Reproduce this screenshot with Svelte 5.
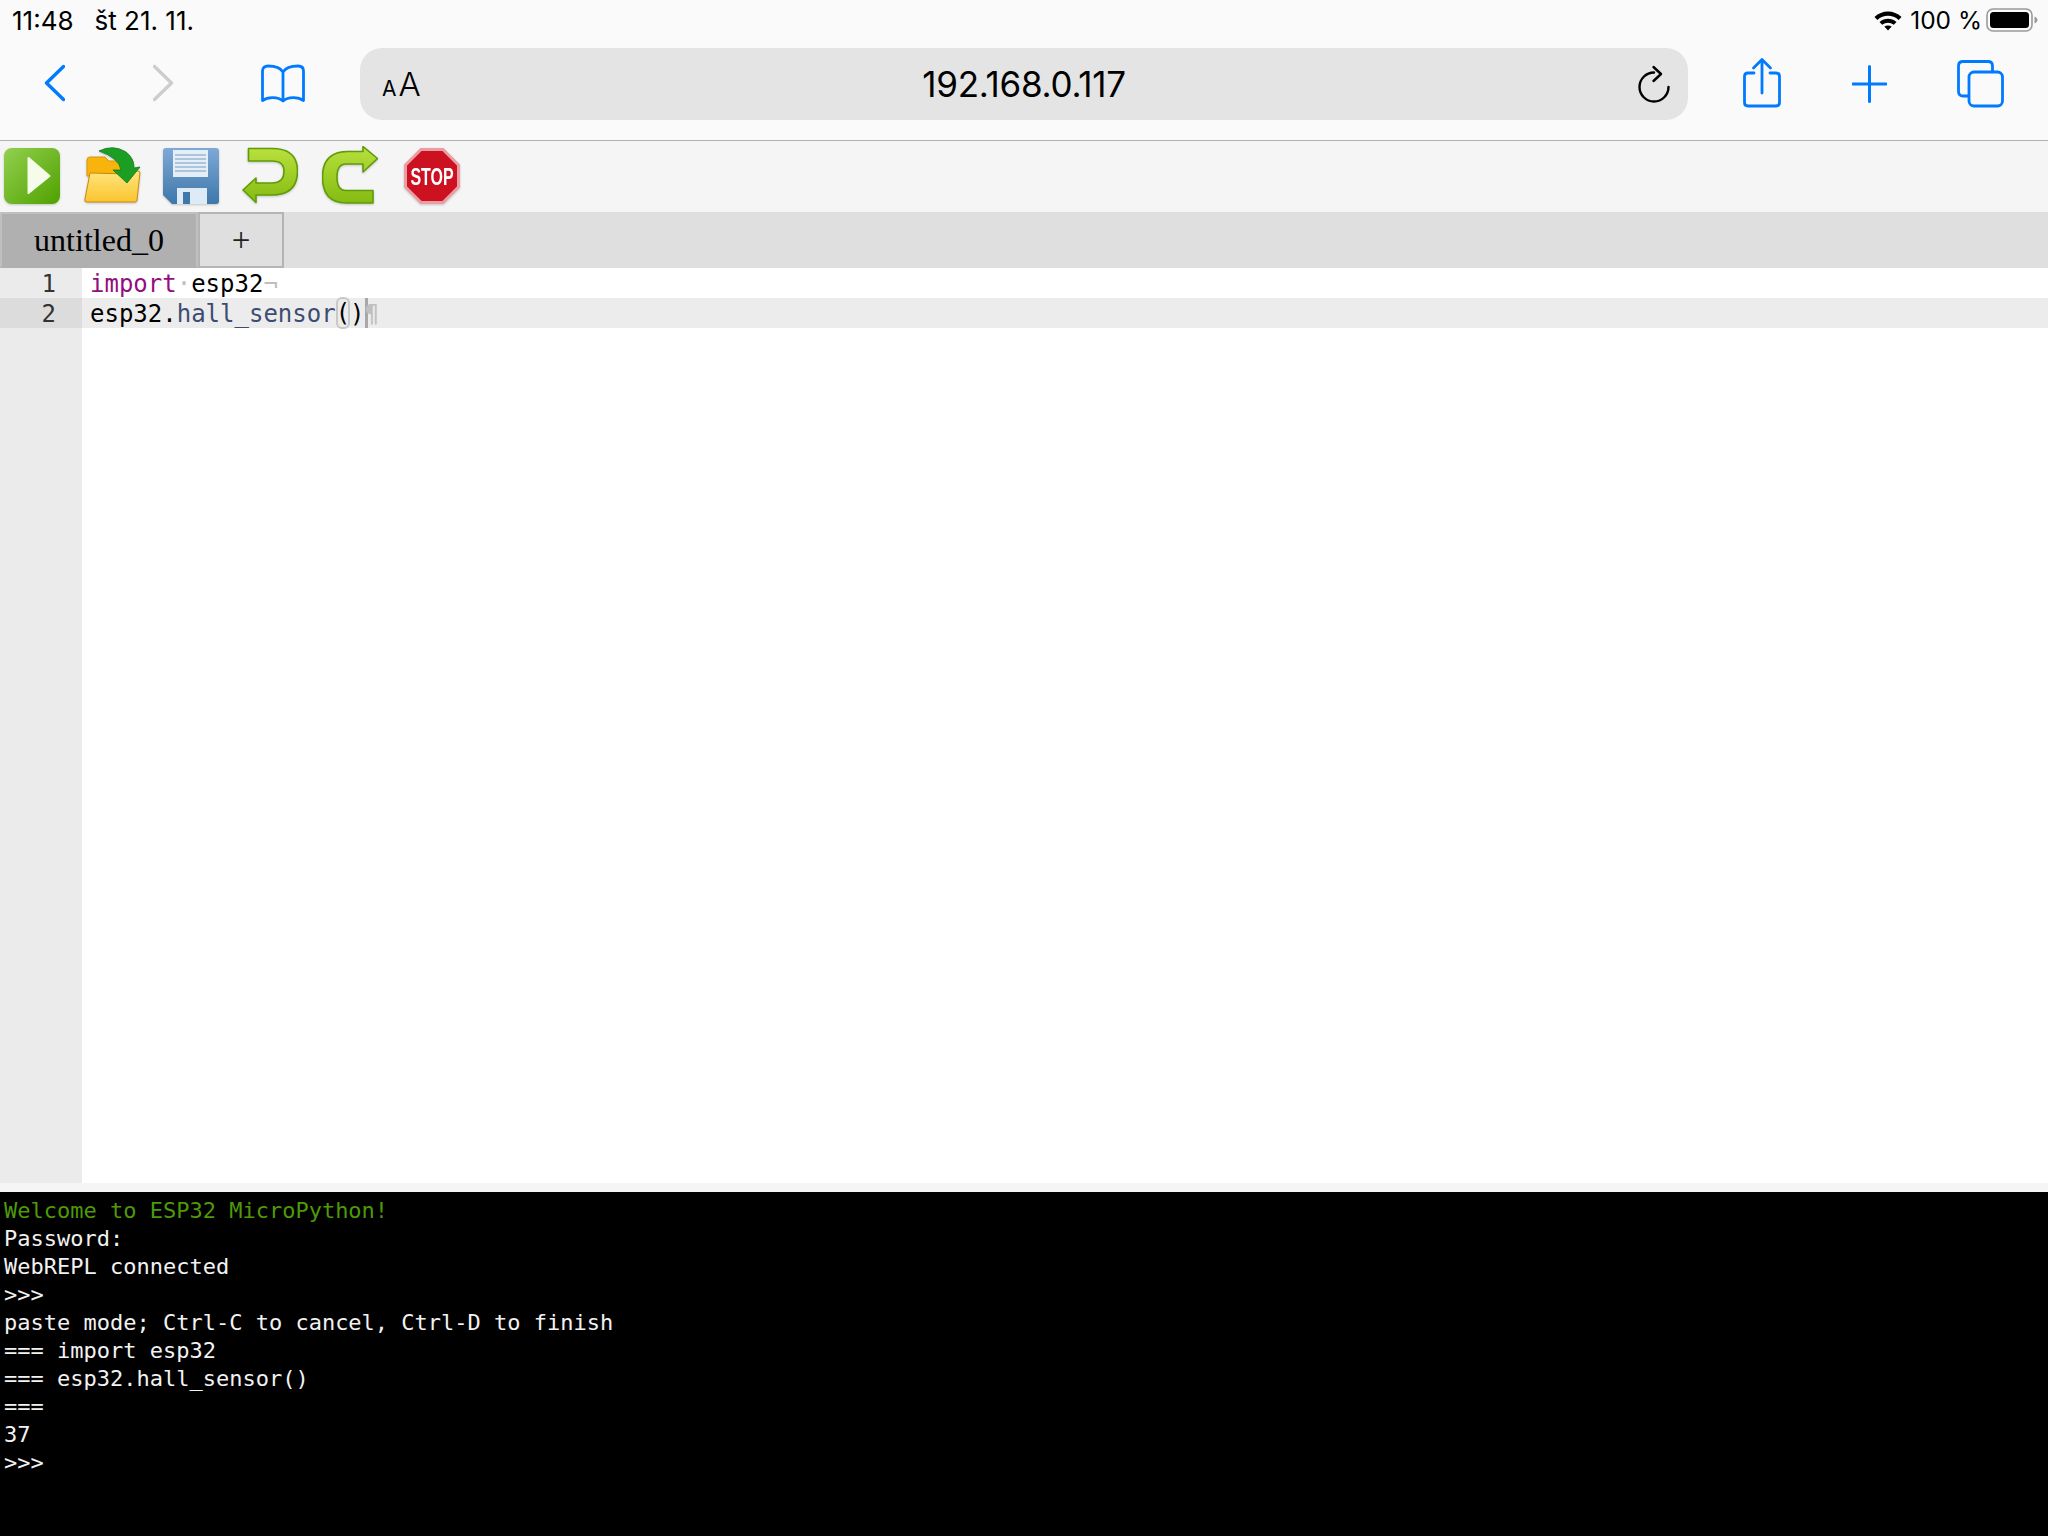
<script>
  const terminal = [
    'Password:',
    'WebREPL connected',
    '>>>',
    'paste mode; Ctrl-C to cancel, Ctrl-D to finish',
    '=== import esp32',
    '=== esp32.hall_sensor()',
    '===',
    '37',
    '>>>'
  ];
</script>

<div class="page">
  <header class="safari">
    <div class="status">
      <span class="time">11:48</span>
      <span class="date">št 21. 11.</span>
      <span class="spacer"></span>
      <svg class="wifi" width="28" height="22" viewBox="0 0 28 22">
        <path d="M0.5 8C8 0.6 20 0.6 27.5 8L24.6 11C18.6 5.4 9.4 5.4 3.4 11Z" fill="#000" />
        <path d="M5.5 13C10.6 8.6 17.4 8.6 22.5 13L19.8 15.8C16.2 12.9 11.8 12.9 8.2 15.8Z" fill="#000" />
        <path d="M10.3 17.6C12.5 16 15.5 16 17.7 17.6L14 21.6Z" fill="#000" />
      </svg>
      <span class="battery-text">100 %</span>
      <svg class="battery" width="52" height="24" viewBox="0 0 52 24">
        <rect x="1" y="1" width="45" height="22" rx="6" fill="none" stroke="#9a9a9a" stroke-width="1.6" />
        <rect x="4" y="4" width="39" height="16" rx="3.5" fill="#000" />
        <path d="M48.5 8.5C50.5 9.2 51.5 10.5 51.5 12C51.5 13.5 50.5 14.8 48.5 15.5Z" fill="#9a9a9a" />
      </svg>
    </div>
    <div class="nav">
      <svg class="back" width="21" height="72" viewBox="0 0 21 72">
        <path d="M19.5 18.5L2.5 35L19.5 51.5" fill="none" stroke="#007aff" stroke-width="3.4" stroke-linecap="round" stroke-linejoin="round" />
      </svg>
      <svg class="forward" width="21" height="72" viewBox="0 0 21 72">
        <path d="M1.5 18.5L18.5 35L1.5 51.5" fill="none" stroke="#cdcdcd" stroke-width="3.4" stroke-linecap="round" stroke-linejoin="round" />
      </svg>
      <svg class="book" width="44" height="72" viewBox="0 0 44 72">
        <path d="M22 24C19 19 13 18 7 18C3.5 18 1.5 20 1.5 23V52.5C7 48.5 17 48.5 22 53C27 48.5 37 48.5 42.5 52.5V23C42.5 20 40.5 18 37 18C31 18 25 19 22 24V53" fill="none" stroke="#007aff" stroke-width="2.8" stroke-linejoin="round" stroke-linecap="round" />
      </svg>
      <div class="url">
        <span class="aa"><span class="small-a">A</span><span class="big-a">A</span></span>
        <span class="address">192.168.0.117</span>
        <svg class="reload" width="34" height="40" viewBox="0 0 34 40">
          <path d="M17 7.5A14.5 14.5 0 1 0 31.5 22" fill="none" stroke="#000" stroke-width="2.4" stroke-linecap="round" />
          <path d="M16.5 2L24 9L16.5 16" fill="none" stroke="#000" stroke-width="2.4" stroke-linecap="round" stroke-linejoin="round" />
        </svg>
      </div>
      <svg class="share" width="38" height="72" viewBox="0 0 38 72">
        <path d="M11 25H5C2.8 25 1.5 26.3 1.5 28.5V54.5C1.5 56.7 2.8 58 5 58H33C35.2 58 36.5 56.7 36.5 54.5V28.5C36.5 26.3 35.2 25 33 25H27" fill="none" stroke="#007aff" stroke-width="2.8" stroke-linecap="round" />
        <path d="M19 45V12.5M10.5 20L19 11.5L27.5 20" fill="none" stroke="#007aff" stroke-width="2.8" stroke-linecap="round" stroke-linejoin="round" />
      </svg>
      <svg class="plus" width="35" height="72" viewBox="0 0 35 72">
        <path d="M17.5 18.5V53.5M1 36H34" fill="none" stroke="#007aff" stroke-width="3" stroke-linecap="round" />
      </svg>
      <svg class="tabs" width="47" height="72" viewBox="0 0 47 72">
        <path d="M11 48H6C3 48 1.5 46.5 1.5 43.5V18C1.5 15 3 13.5 6 13.5H31C34 13.5 35.5 15 35.5 18V23" fill="none" stroke="#007aff" stroke-width="2.8" />
        <rect x="12" y="24" width="33.5" height="34" rx="5" fill="none" stroke="#007aff" stroke-width="2.8" />
      </svg>
    </div>
  </header>

  <div class="tools">
    <svg class="icon low" width="56" height="56" viewBox="0 0 56 56">
      <defs>
        <linearGradient id="play" x1="0" y1="0" x2="1" y2="1">
          <stop offset="0" stop-color="#93d04f" />
          <stop offset="1" stop-color="#4fa100" />
        </linearGradient>
      </defs>
      <rect width="56" height="56" rx="8" fill="url(#play)" />
      <path d="M24.5 10L45.5 28L24.5 45Z" fill="#f6fcea" stroke="#f6fcea" stroke-width="2" stroke-linejoin="round" />
    </svg>

    <svg class="icon open" width="58" height="58" viewBox="0 0 58 58">
      <defs>
        <linearGradient id="folder" x1="0" y1="0" x2="0" y2="1">
          <stop offset="0" stop-color="#ffe680" />
          <stop offset="1" stop-color="#fbc52f" />
        </linearGradient>
      </defs>
      <path d="M3 30V14Q3 11 6 11H21L25 15H49V30Z" fill="#f8b40c" stroke="#d9960a" />
      <path d="M6 27L46 28L51 24L56 26L53 54Q53 56 51 56H3Q0 56 1 53Z" fill="url(#folder)" stroke="#c8890a" />
      <path d="M15 5Q29 -2 42 6Q50 12 50 22L56 21L43 37L29 24L37 24Q35 12 15 5Z" fill="#1c9e25" stroke="#0f7a18" stroke-width="0.8" />
    </svg>

    <svg class="icon low save" width="56" height="56" viewBox="0 0 56 56">
      <defs>
        <linearGradient id="disk" x1="0" y1="0" x2="0" y2="1">
          <stop offset="0" stop-color="#7fa9d6" />
          <stop offset="1" stop-color="#3d77aa" />
        </linearGradient>
      </defs>
      <path d="M3 0H53Q56 0 56 3V53Q56 56 53 56H9L0 47V3Q0 0 3 0Z" fill="url(#disk)" />
      <rect x="10" y="2" width="35" height="27" fill="#e4eef7" />
      <path d="M12 7H43M12 11H43M12 15H43M12 19H43M12 23H43" stroke="#9ab8d4" stroke-width="1.5" />
      <rect x="14" y="40" width="30" height="16" fill="#dcebf5" />
      <rect x="20" y="44" width="7" height="12" fill="#3f77a8" />
    </svg>

    <svg class="icon undo" width="56" height="58" viewBox="0 0 56 58">
      <defs>
        <linearGradient id="arrow" x1="0" y1="0" x2="0" y2="1">
          <stop offset="0" stop-color="#b9e03e" />
          <stop offset="1" stop-color="#84bb12" />
        </linearGradient>
      </defs>
      <path d="M6.5 2.5H30Q55.5 2.5 55.5 25Q55.5 49 30 49H14V56.5L1 44L14 32V37H30Q42 37 42 25Q42 15 30 15H6.5Z" fill="url(#arrow)" stroke="#5f9c08" stroke-width="1.6" stroke-linejoin="round" />
    </svg>

    <svg class="icon" width="56" height="58" viewBox="0 0 56 58">
      <path d="M51 44.5H24Q15 44.5 15 31Q15 18 24 18H41V26L55.5 12.5L41 0.5V5.5H26Q0.5 5.5 0.5 31Q0.5 57 24 57H51Z" fill="url(#arrow)" stroke="#5f9c08" stroke-width="1.6" stroke-linejoin="round" />
    </svg>

    <svg class="icon low stop-sign" width="56" height="56" viewBox="0 0 56 56">
      <path d="M17 1.5H39L54.5 17V39L39 54.5H17L1.5 39V17Z" fill="#cc1120" stroke="#ec9ca4" stroke-width="3" />
      <text class="stop" text-anchor="middle" transform="translate(28 36.5) scale(0.82 1.24)">STOP</text>
    </svg>
  </div>

  <div class="tabbar">
    <div class="tab active">untitled_0</div>
    <div class="tab add">+</div>
  </div>

  <main class="editor">
    <div class="gutter">
      <div class="num">1</div>
      <div class="num current">2</div>
    </div>
    <div class="code">
      <div class="line"><span class="kw">import</span><span class="inv">·</span>esp32<span class="inv">¬</span></div>
      <div class="line current">esp32.<span class="fn">hall_sensor</span><span class="bracket">(</span>)<span class="caret"></span><span class="inv">¶</span></div>
    </div>
  </main>

  <div class="splitter"></div>

  <section class="terminal">
    <div class="row welcome">Welcome to ESP32 MicroPython!</div>
    {#each terminal as row}
      <div class="row">{row}</div>
    {/each}
  </section>
</div>

<style>
  :global(body) {
    margin: 0;
    overflow: hidden;
  }

  .page {
    width: 2048px;
    height: 1536px;
    display: flex;
    flex-direction: column;
    background: #fff;
  }

  .safari {
    height: 141px;
    flex: none;
    box-sizing: border-box;
    background: #fafafa;
    border-bottom: 1px solid #b2b2b2;
  }

  .status {
    height: 40px;
    display: flex;
    align-items: center;
    padding-left: 12px;
    font-family: Inter, sans-serif;
    font-size: 26px;
    color: #000;
  }

  .date {
    margin-left: 21px;
  }

  .spacer {
    flex: 1;
  }

  .wifi {
    margin-right: 8px;
  }

  .battery-text {
    font-size: 24.5px;
  }

  .battery {
    margin-left: 4px;
    margin-right: 10px;
  }

  .nav {
    height: 72px;
    margin-top: 8px;
    display: flex;
    padding-left: 44px;
  }

  .forward {
    margin-left: 88px;
  }

  .book {
    margin-left: 87px;
  }

  .url {
    width: 1328px;
    margin-left: 55px;
    position: relative;
    display: flex;
    align-items: center;
    justify-content: space-between;
    box-sizing: border-box;
    padding: 0 17px 0 22px;
    background: #e4e4e4;
    border-radius: 22px;
    color: #000;
    font-family: Inter, sans-serif;
  }

  .aa {
    display: flex;
    align-items: baseline;
    gap: 2px;
  }

  .small-a {
    font-size: 21px;
  }

  .big-a {
    font-size: 33px;
    font-weight: 300;
  }

  .address {
    position: absolute;
    left: 0;
    right: 0;
    text-align: center;
    font-size: 35px;
    letter-spacing: -0.25px;
  }

  .reload {
    margin-top: 2px;
  }

  .share {
    margin-left: 55px;
  }

  .plus {
    margin-left: 71px;
  }

  .tabs {
    margin-left: 70px;
  }

  .tools {
    height: 71px;
    flex: none;
    box-sizing: border-box;
    display: flex;
    align-items: flex-start;
    gap: 24px;
    padding: 5px 0 0 4px;
    background: #f5f5f5;
  }

  .icon {
    flex: none;
    filter: blur(0.5px) drop-shadow(0 1px 1px rgba(0, 0, 0, 0.2));
  }

  .low {
    margin-top: 2px;
  }

  .open {
    margin-right: -2px;
  }

  .save,
  .undo {
    margin-left: -1px;
  }

  .stop-sign {
    margin-left: 2px;
  }

  .stop {
    font-family: "Liberation Sans", sans-serif;
    font-size: 19.5px;
    font-weight: 700;
    fill: #fff;
  }

  .tabbar {
    height: 56px;
    flex: none;
    display: flex;
    background: #dfdfdf;
  }

  .tab {
    height: 56px;
    box-sizing: border-box;
    display: flex;
    align-items: center;
    justify-content: center;
    font-family: "Liberation Serif", serif;
    font-size: 32px;
    color: #000;
  }

  .active {
    width: 198px;
    border: 2px solid #c0c0c0;
    border-bottom: 2px solid #b0b0b0;
    background: #b0b0b0;
  }

  .add {
    width: 86px;
    border: 2px solid #b4b4b4;
    font-size: 33px;
    color: #222;
  }

  .editor {
    flex: 1;
    display: flex;
    font-family: "DejaVu Sans Mono", monospace;
    font-size: 24px;
    line-height: 30px;
    color: #000;
  }

  .gutter {
    width: 82px;
    flex: none;
    background: #ebebeb;
    color: #333;
  }

  .num {
    height: 30px;
    box-sizing: border-box;
    padding-top: 1px;
    padding-right: 26px;
    text-align: right;
  }

  .num.current {
    background: #dcdcdc;
  }

  .code {
    flex: 1;
  }

  .line {
    height: 30px;
    box-sizing: border-box;
    padding: 1px 0 0 8px;
    white-space: pre;
  }

  .line.current {
    background: #ececec;
  }

  .kw {
    color: #930f80;
  }

  .fn {
    color: #3c4c72;
  }

  .inv {
    color: #bfbfbf;
  }

  .bracket {
    display: inline-block;
    height: 32px;
    margin-top: -2px;
    box-sizing: border-box;
    vertical-align: top;
    line-height: 32px;
    outline: 2px solid #c8c8c8;
    outline-offset: -2px;
    border-radius: 6px;
  }

  .caret {
    display: inline-block;
    width: 3px;
    height: 30px;
    margin-top: -1px;
    margin-right: -3px;
    vertical-align: top;
    background: #a8a8a8;
  }

  .splitter {
    height: 9px;
    flex: none;
    background: #f5f5f5;
  }

  .terminal {
    height: 344px;
    flex: none;
    box-sizing: border-box;
    padding: 5px 0 0 4px;
    background: #000;
    color: #f2f2f2;
    font-family: "DejaVu Sans Mono", monospace;
    font-size: 22px;
    line-height: 28px;
  }

  .row {
    height: 28px;
    white-space: pre;
  }

  .welcome {
    color: #4e9a06;
  }
</style>
